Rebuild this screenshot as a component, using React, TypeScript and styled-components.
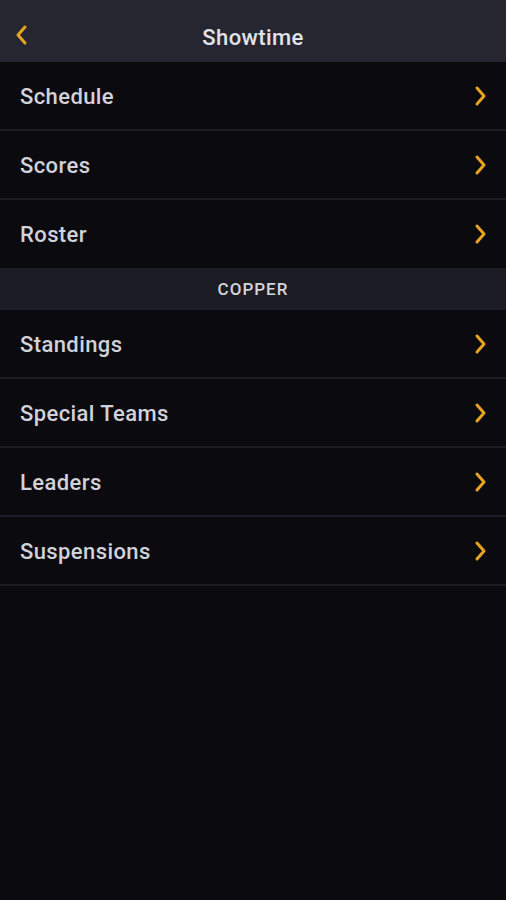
import styled, { createGlobalStyle } from "styled-components"

const GlobalStyle = createGlobalStyle`
    html, body {
        margin: 0;
        padding: 0;
        background-color: #0a0a0f;
    }
    * {
        box-sizing: border-box;
    }
`

const Main = styled.div`
    width: 506px;
    min-height: 900px;
    display: flex;
    flex-direction: column;
    background-color: #0a0a0f;
    font-family: Roboto, "Liberation Sans", sans-serif;
`

const Header = styled.div`
    height: 62px;
    display: flex;
    align-items: center;
    justify-content: center;
    position: relative;
    background-color: #262631;
`

const BackButton = styled.div`
    position: absolute;
    left: 14px;
    top: 24px;
    display: flex;
`

const Title = styled.h1`
    margin: 0;
    font-size: 22px;
    font-weight: 500;
    letter-spacing: 0.4px;
    color: #e2e2ea;
    padding-top: 12px;
`

const Row = styled.div`
    height: 69px;
    display: flex;
    align-items: center;
    justify-content: space-between;
    padding: 0 18px 0 20px;
    border-bottom: 2px solid #1d1d25;
`

const LastRow = styled(Row)`
    border-bottom: none;
    height: 68px;
`

const RowText = styled.span`
    font-size: 22px;
    font-weight: 500;
    letter-spacing: 0.4px;
    color: #d2d2da;
    padding-top: 1px;
`

const Section = styled.div`
    height: 42px;
    display: flex;
    align-items: center;
    justify-content: center;
    background-color: #1c1c24;
`

const SectionText = styled.span`
    font-size: 17px;
    font-weight: 500;
    letter-spacing: 1px;
    color: #d4d4dc;
`

const Chevron = ({ left }: { left?: boolean }) => (
    <svg width="14" height="22" viewBox="0 0 14 22">
        <path
            d={left ? "M11 3 L4 11 L11 19" : "M3 3 L10 11 L3 19"}
            fill="none"
            stroke="#e9a31e"
            strokeWidth="3"
            strokeLinecap="round"
            strokeLinejoin="round"
        />
    </svg>
)

const Item = ({ label }: { label: string }) => (
    <Row>
        <RowText>{label}</RowText>
        <Chevron />
    </Row>
)

export default function App() {
    return (
        <>
            <GlobalStyle />
            <Main>
                <Header>
                    <BackButton>
                        <Chevron left />
                    </BackButton>
                    <Title>Showtime</Title>
                </Header>
                <Item label="Schedule" />
                <Item label="Scores" />
                <LastRow>
                    <RowText>Roster</RowText>
                    <Chevron />
                </LastRow>
                <Section>
                    <SectionText>COPPER</SectionText>
                </Section>
                <Item label="Standings" />
                <Item label="Special Teams" />
                <Item label="Leaders" />
                <Item label="Suspensions" />
            </Main>
        </>
    )
}
